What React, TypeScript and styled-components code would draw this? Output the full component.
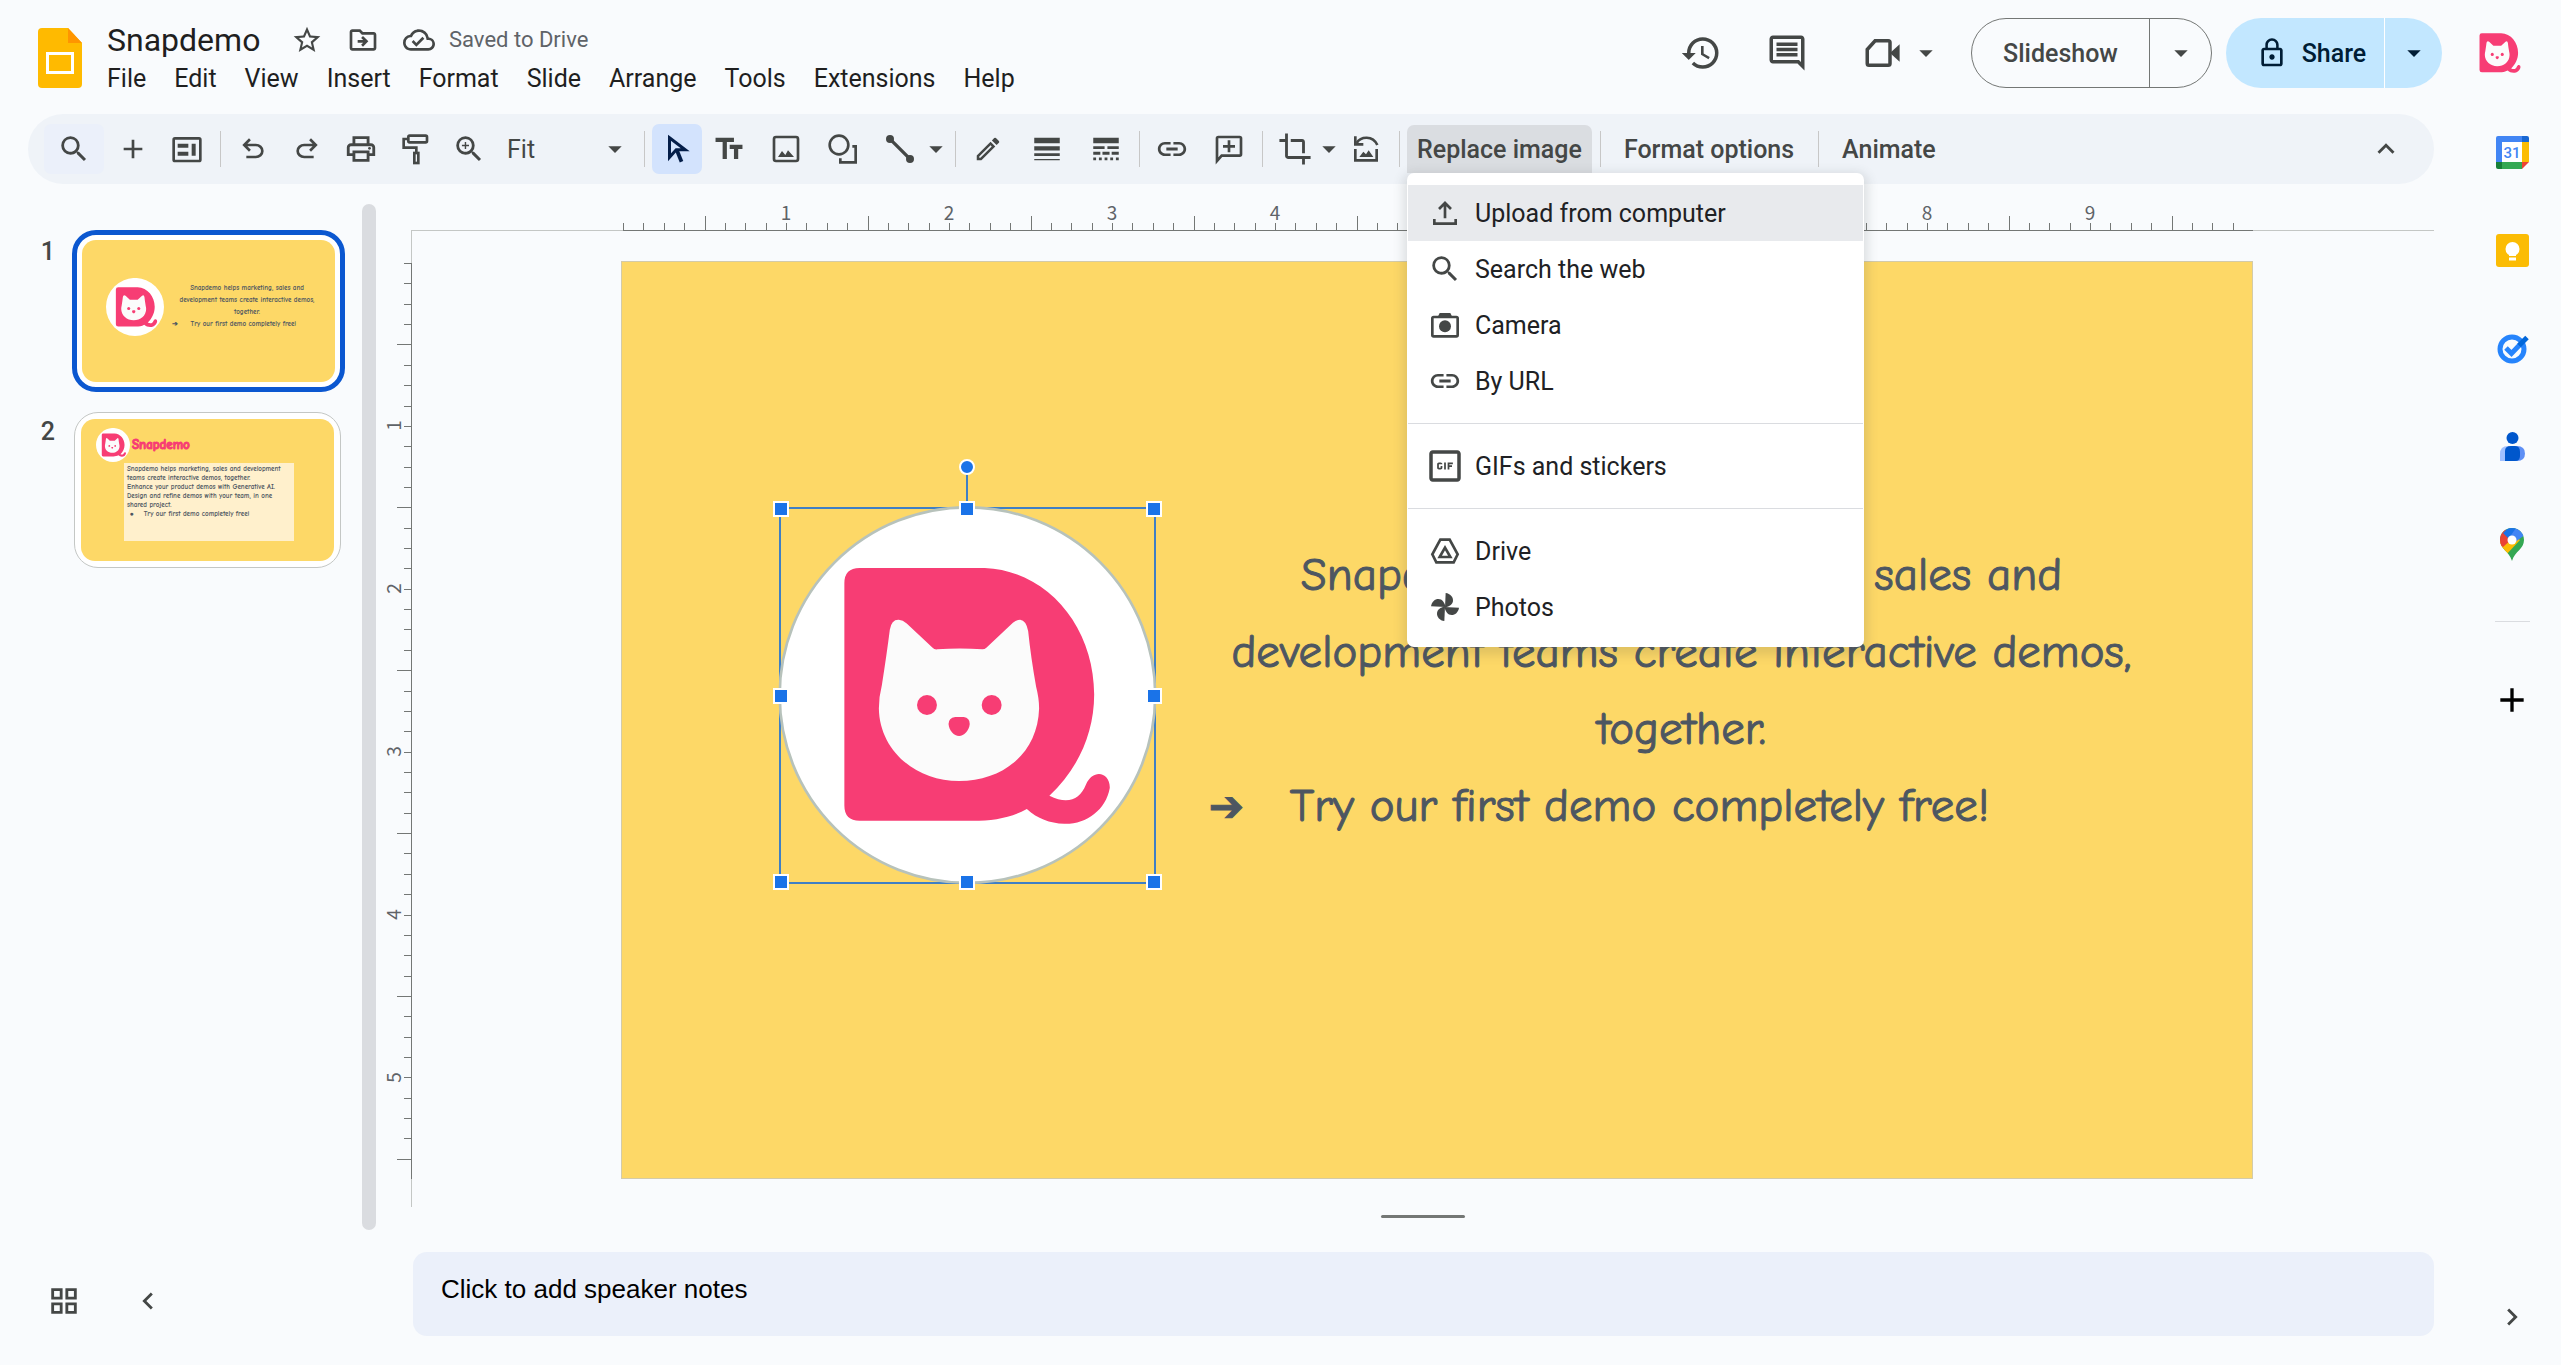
import React from "react";
import styled, { createGlobalStyle } from "styled-components";
import {
  MdSearch, MdAdd, MdStarBorder, MdOutlineDriveFileMove, MdOutlineCloudDone, MdHistory,
  MdOutlineInsertComment, MdOutlinePrint, MdZoomIn, MdTextFields, MdLineWeight, MdLineStyle,
  MdLink, MdCrop, MdKeyboardArrowUp, MdLockOutline, MdOutlineGifBox, MdOutlineGridView,
  MdArrowDropDown, MdChevronLeft, MdChevronRight, MdOutlineModeEdit,
} from "react-icons/md";

const ui = `Roboto, "Liberation Sans", sans-serif`;
const comic = `"Comic Sans MS", "Comic Neue", "Open Sans", sans-serif`;
const ink = "#444746";
const pink = "#f73d74";
const yellow = "#fdd867";
const blue = "#1a73e8";

const GlobalStyle = createGlobalStyle`
  *, *::before, *::after { box-sizing: border-box; }
  body { margin: 0; background: #f9fbfd; font-family: ${ui}; color: #1f1f1f; }
  button, input, select, textarea { font: inherit; color: inherit; border: 0; padding: 0; margin: 0; background: none; outline: none; }
  svg { display: block; flex: none; }
`;

/* ---------- page ---------- */
const Page = styled.div`
  display: flex;
  flex-direction: column;
  min-height: 100vh;
`;
const Header = styled.header`
  display: flex;
  align-items: flex-start;
  height: 114px;
  padding: 18px 40px 0 38px;
`;
const Body = styled.div`
  display: flex;
  flex: 1;
`;
const Main = styled.main`
  display: flex;
  flex-direction: column;
  flex: 1;
  min-width: 0;
  padding-right: 29px;
`;

/* ---------- header ---------- */
const DocLogo = styled.a`
  padding-top: 10px;
`;
const DocInfo = styled.div`
  margin-left: 25px;
`;
const TitleRow = styled.div`
  display: flex;
  align-items: center;
  gap: 24px;
  height: 44px;
  color: ${ink};
`;
const TitleInput = styled.input`
  width: 160px;
  font-size: 32px;
  line-height: 40px;
  color: #1f1f1f;
`;
const BareButton = styled.button`
  display: flex;
  align-items: center;
  justify-content: center;
  color: ${ink};
`;
const SavedButton = styled(BareButton)`
  gap: 14px;
  font-size: 22px;
  line-height: 32px;
  color: #5f6368;
`;
const MenuBar = styled.nav`
  display: flex;
  gap: 28px;
  height: 34px;
`;
const MenuBarButton = styled.button`
  font-size: 25px;
  line-height: 34px;
`;
const HeaderTools = styled.div`
  display: flex;
  align-items: center;
  height: 70px;
  margin-left: auto;
`;
const HeaderIcons = styled.div`
  display: flex;
  gap: 30px;
  margin-right: 30px;
`;
const HeaderIcon = styled(BareButton)`
  width: 56px;
  height: 56px;
`;
const MeetGroup = styled.div`
  display: flex;
  padding-left: 10px;
`;
const MeetCaret = styled(BareButton)`
  width: 30px;
`;
const SlideshowPill = styled.div`
  display: flex;
  height: 70px;
  width: 241px;
  border: 1px solid #747775;
  border-radius: 35px;
  color: ${ink};
`;
const SharePill = styled.div`
  display: flex;
  height: 70px;
  width: 216px;
  margin: 0 37px 0 14px;
  border-radius: 35px;
  background: #c2e7ff;
  color: #001d35;
`;
const PillMain = styled.button<{ $pad?: number }>`
  display: flex;
  flex: 1;
  align-items: center;
  justify-content: center;
  gap: 14px;
  padding-left: ${(p) => p.$pad ?? 0}px;
  font-size: 25px;
  font-weight: 500;
`;
const PillCaret = styled.button<{ $line: string; $w: number }>`
  display: flex;
  align-items: center;
  justify-content: center;
  width: ${(p) => p.$w}px;
  border-left: 1px solid ${(p) => p.$line};
`;

/* ---------- toolbar ---------- */
const Toolbar = styled.div`
  display: flex;
  align-items: center;
  height: 70px;
  margin-left: 28px;
  padding: 0 23px 0 16px;
  border-radius: 35px;
  background: #eff3f8;
  color: ${ink};
`;
const Group = styled.div<{ $gap?: number }>`
  display: flex;
  gap: ${(p) => p.$gap ?? 0}px;
`;
const InsertGroup = styled(Group)`
  padding-left: 2px;
`;
const Rule = styled.span`
  width: 1px;
  height: 36px;
  margin: 0 7px 0 8px;
  background: #c7c7c7;
`;
const Tool = styled.button<{ $w?: number; $bg?: string }>`
  display: flex;
  align-items: center;
  justify-content: center;
  width: ${(p) => p.$w ?? 50}px;
  height: 50px;
  border-radius: 7px;
  background: ${(p) => p.$bg ?? "none"};
`;
const ZoomBox = styled.label`
  display: flex;
  align-items: center;
  width: 138px;
  height: 50px;
  margin-left: 4px;
  padding: 0 5px 0 9px;
`;
const ZoomSelect = styled.select`
  flex: 1;
  appearance: none;
  font-size: 25px;
`;
const TextTool = styled.button<{ $on?: boolean; $pad: number }>`
  display: block;
  height: 48px;
  padding: 0 ${(p) => p.$pad}px;
  border-radius: 7px 7px 0 0;
  font-size: 25px;
  font-weight: 500;
  white-space: nowrap;
  background: ${(p) => (p.$on ? "#dadde1" : "none")};
`;
const MenuAnchor = styled.div`
  position: relative;
`;
const CollapseButton = styled(Tool)`
  margin-left: auto;
`;

/* ---------- drop-down menu ---------- */
const Menu = styled.div`
  position: absolute;
  z-index: 5;
  top: 100%;
  left: 0;
  width: 457px;
  padding: 12px 1px;
  border-radius: 7px;
  background: #fff;
  box-shadow: 0 4px 11px 4px rgba(60, 64, 67, 0.15);
`;
const MenuItem = styled.button<{ $on?: boolean }>`
  display: flex;
  align-items: center;
  gap: 14px;
  width: 100%;
  height: 56px;
  padding-left: 21px;
  font-size: 25px;
  color: #202124;
  background: ${(p) => (p.$on ? "#e8eaed" : "none")};
  svg { color: ${ink}; }
`;
const MenuRule = styled.hr`
  height: 1px;
  margin: 14px 0;
  border: 0;
  background: #dadce0;
`;

/* ---------- filmstrip ---------- */
const Work = styled.div`
  display: flex;
  flex: 1;
`;
const Side = styled.aside`
  display: flex;
  flex-direction: column;
  width: 377px;
`;
const FilmArea = styled.div`
  display: flex;
  flex: 1;
  justify-content: space-between;
  padding-right: 1px;
`;
const FilmList = styled.ol`
  display: flex;
  flex-direction: column;
  gap: 18px;
  margin: 0;
  padding: 46px 0 0 31px;
  list-style: none;
`;
const FilmItem = styled.li`
  display: flex;
  align-items: flex-start;
`;
const FilmNumber = styled.span`
  width: 24px;
  margin-right: 17px;
  padding-top: 5px;
  text-align: right;
  font-size: 25px;
  line-height: 34px;
  font-weight: 500;
  color: ${ink};
`;
const Frame = styled.button<{ $on?: boolean }>`
  display: block;
  padding: ${(p) => (p.$on ? 5 : 6)}px;
  margin: ${(p) => (p.$on ? 0 : 2)}px;
  border: ${(p) => (p.$on ? "5px solid #0b57d0" : "1px solid #c4c7c5")};
  border-radius: 24px;
  background: #fff;
  text-align: left;
`;
const ThumbSlide = styled.span`
  position: relative;
  display: block;
  width: 253px;
  height: 142px;
  border-radius: 14px;
  background: ${yellow};
  overflow: hidden;
  font-family: ${comic};
  font-weight: 700;
  color: #4d5661;
`;
const ThumbLogo = styled.span<{ $x: number; $y: number; $s: number }>`
  position: absolute;
  left: ${(p) => p.$x}px;
  top: ${(p) => p.$y}px;
  width: ${(p) => p.$s}px;
  height: ${(p) => p.$s}px;
  svg { width: 100%; height: 100%; }
`;
const ThumbText = styled.span`
  position: absolute;
  left: 90px;
  top: 42px;
  width: 150px;
  font-size: 7px;
  line-height: 12px;
  text-align: center;
  white-space: nowrap;
  span { display: block; }
`;
const ThumbBullet = styled.b`
  display: block;
  text-align: left;
  white-space: pre;
`;
const ThumbTitle = styled.span`
  position: absolute;
  left: 51px;
  top: 17px;
  font-size: 13px;
  line-height: 18px;
  -webkit-text-stroke: 1px ${pink};
  color: ${pink};
`;
const ThumbBox = styled.span`
  position: absolute;
  left: 43px;
  top: 44px;
  width: 170px;
  height: 78px;
  padding: 2px 3px;
  background: #fff0cc;
  font-size: 7px;
  line-height: 9px;
  white-space: pre;
  span { display: block; }
`;
const FilmScroll = styled.div`
  width: 14px;
  margin-top: 20px;
  border-radius: 7px;
  background: #dadce0;
`;
const SideFooter = styled.div`
  display: flex;
  align-items: center;
  gap: 34px;
  height: 135px;
  padding: 6px 0 0 39px;
`;
const FooterButton = styled(BareButton)`
  width: 50px;
  height: 50px;
`;

/* ---------- canvas ---------- */
const Stage = styled.section`
  display: flex;
  flex-direction: column;
  flex: 1;
  min-width: 0;
`;
const RulerTop = styled.div`
  height: 47px;
  margin-left: 34px;
  padding: 0 181px 0 212px;
  border-bottom: 1px solid #c4c7c5;
`;
const RulerTopInner = styled.div`
  display: flex;
  flex-direction: column;
  justify-content: flex-end;
  height: 47px;
  border-bottom: 1px solid #747775;
`;
const LabelsTop = styled.div`
  display: flex;
  padding: 0 5%;
  font-family: "Noto Sans CJK SC", sans-serif;
  font-size: 19px;
  line-height: 8px;
  color: #5f6368;
  span { flex: 1; text-align: center; }
`;
const TicksTop = styled.div`
  display: flex;
  align-items: flex-end;
  height: 14px;
`;
const TickTop = styled.i<{ $long: boolean }>`
  flex: 1;
  height: ${(p) => (p.$long ? 14 : 7)}px;
  border-left: 1px solid #747775;
`;
const StageRow = styled.div`
  display: flex;
`;
const RulerLeft = styled.div`
  display: flex;
  width: 35px;
  padding: 32px 0 28px;
  border-right: 1px solid #c4c7c5;
`;
const RulerLeftInner = styled.div`
  display: flex;
  justify-content: flex-end;
  width: 35px;
  flex: none;
  border-right: 1px solid #747775;
`;
const LabelsLeft = styled.div`
  display: flex;
  flex-direction: column;
  font-family: "Noto Sans CJK SC", sans-serif;
  font-size: 19px;
  line-height: 8px;
  color: #5f6368;
`;
const LabelLeft = styled.span<{ $grow: number }>`
  display: flex;
  align-items: center;
  justify-content: center;
  flex: ${(p) => p.$grow} 1 0;
  writing-mode: vertical-rl;
  rotate: 180deg;
`;
const TicksLeft = styled.div`
  display: flex;
  flex-direction: column;
  align-items: flex-end;
  width: 14px;
`;
const TickLeft = styled.i<{ $long: boolean }>`
  flex: 1;
  width: ${(p) => (p.$long ? 14 : 7)}px;
  border-top: 1px solid #747775;
`;
const Canvas = styled.div`
  flex: 1;
  padding: 30px 181px 28px 209px;
`;
const Slide = styled.div`
  position: relative;
  aspect-ratio: 16 / 9;
  border: 1px solid #d3cba9;
  background: ${yellow};
`;
const ImageBox = styled.div`
  position: absolute;
  left: 10%;
  top: 27%;
  width: calc(23% + 2px);
  aspect-ratio: 1;
  margin: -2px 0 0 -6px;
  border: 2px solid #3f7fc4;
  > svg { width: 100%; height: 100%; overflow: visible; }
`;
const Handle = styled.span<{ $x: number; $y: number }>`
  position: absolute;
  left: ${(p) => p.$x}%;
  top: ${(p) => p.$y}%;
  width: 16px;
  height: 16px;
  margin: -8px;
  border: 2px solid #fff;
  background: ${blue};
`;
const RotateStem = styled.span`
  position: absolute;
  left: calc(50% - 1px);
  bottom: 100%;
  width: 2px;
  height: 42px;
  background: #3f7fc4;
`;
const RotateKnob = styled(Handle)`
  margin-top: -50px;
  border-radius: 50%;
`;
const SlideText = styled.div`
  position: absolute;
  left: 36%;
  top: 30%;
  width: 58%;
  font-family: ${comic};
  font-size: 47px;
  font-variant-ligatures: none;
  -webkit-text-stroke: 1px #4d5661;
  line-height: 77px;
  color: #4d5661;
  text-align: center;
  p { margin: 0; white-space: nowrap; }
`;
const BulletLine = styled.p`
  display: flex;
`;
const BulletMark = styled.span`
  width: 81px;
  text-align: left;
  font-family: "DejaVu Sans", sans-serif;
  font-size: 42px;
`;
const Splitter = styled.div`
  width: 84px;
  height: 3px;
  margin: 8px auto 34px;
  border-radius: 2px;
  background: #747775;
  translate: 17px 0;
`;
const Notes = styled.textarea`
  display: block;
  height: 84px;
  margin: 0 0 28px 36px;
  padding: 20px 28px;
  border-radius: 14px;
  background: #ebf0fa;
  resize: none;
  font-family: "Liberation Sans", Arial, sans-serif;
  font-size: 26px;
  line-height: 34px;
  &::placeholder { color: #000; opacity: 1; }
`;

/* ---------- right rail ---------- */
const Rail = styled.aside`
  display: flex;
  flex-direction: column;
  align-items: center;
  width: 98px;
  padding-bottom: 23px;
`;
const RailButton = styled(BareButton)`
  width: 77px;
  height: 50px;
  margin: 13px 0 35px;
`;
const RailRule = styled.hr`
  width: 35px;
  height: 1px;
  margin: 17px 0 40px;
  border: 0;
  background: #dadce0;
`;
const RailToggle = styled(BareButton)`
  width: 50px;
  height: 50px;
  margin-top: auto;
`;

/* ---------- drawings ---------- */
const CatMark = () => (
  <>
    <path fill={pink} d="M358 382H735C925 390 1065 560 1065 763C1065 880 1015 990 930 1068C985 1096 1022 1080 1040 1035C1062 984 1114 998 1112 1045C1100 1112 1040 1155 975 1153C930 1150 895 1138 862 1108C815 1135 760 1144 700 1144H358Q312 1144 312 1098V428Q312 382 358 382Z" />
    <path fill="#fbfbfb" d="M449 568Q454 537 476 538Q488 538 500 549L578 622Q583 628 592 627Q660 622 728 627Q735 627 740 622L820 547Q832 538 842 538Q860 540 866 572Q874 650 890 740Q899 775 899 805C895 940 790 1024 658 1024C525 1024 418 930 416 805Q416 770 425 735Q440 640 449 568Z" />
    <g fill={pink}>
      <circle cx="561" cy="795" r="30" />
      <circle cx="756" cy="795" r="30" />
      <path d="M646 831H672Q690 834 690 852C688 872 672 888 658 888C642 888 628 872 626 852Q626 834 646 831Z" />
    </g>
  </>
);
const CatBadge = ({ ring }: { ring?: boolean }) => (
  <svg viewBox="121 204 1124 1124" aria-label="Snapdemo logo">
    <circle cx="683" cy="765" r={ring ? 566 : 562} fill="#fff" stroke="#b7c2bb" strokeWidth={ring ? 8 : 0} />
    <CatMark />
  </svg>
);
const CatAvatar = () => (
  <svg width="42" height="42" viewBox="302 372 820 791"><CatMark /></svg>
);

const Line = ({ size = 32, w = 2, children }: { size?: number; w?: number; children: React.ReactNode }) => (
  <svg width={size} height={size} viewBox="0 0 24 24" fill="none" stroke="currentColor" strokeWidth={w}>{children}</svg>
);
const SlidesLogo = () => (
  <svg width="44" height="60" viewBox="0 0 44 60">
    <path fill="#ffba00" d="M4 0H30L44 15V56Q44 60 40 60H4Q0 60 0 56V4Q0 0 4 0Z" />
    <path fill="#ff9500" d="M30 0L44 15H30Z" />
    <path fill="none" stroke="#fff" strokeWidth="3" d="M9.500 25.500H34.500V44.500H9.500Z" />
  </svg>
);
const PanelIcon = () => (
  <Line><rect x="2" y="4" width="20" height="17" rx="1" /><path d="M5 9.500h8M5 15.500h8M17 8v9" strokeWidth="3" /></Line>
);
const UndoIcon = ({ flip }: { flip?: boolean }) => (
  <svg width="32" height="32" viewBox="0 -960 960 960" fill="currentColor">
    <path transform={flip ? "translate(960 0) scale(-1 1)" : undefined} d="M280-200v-80h284q63 0 109.500-40T720-420q0-60-46.500-100T564-560H312l104 104-56 56-200-200 200-200 56 56-104 104h252q97 0 166.500 63T800-420q0 94-69.500 157T564-200H280Z" />
  </svg>
);
const RollerIcon = () => (
  <Line><rect x="7" y="2" width="14" height="5" rx="1" /><path d="M7 4.500H3.500V11H13V15" /><rect x="11.500" y="15" width="3" height="7.500" /></Line>
);
const CursorIcon = () => (
  <svg width="36" height="36" viewBox="0 0 24 24" fill="none" stroke="#041e49" strokeWidth="2">
    <path d="M7 4.500L17.500 12.500H11.500L7 17.500Z" />
    <path d="M12 13L15 20.500" strokeWidth="2.500" />
  </svg>
);
const PictureIcon = () => (
  <Line><rect x="3" y="3" width="18" height="18" rx="1.500" /><path d="M6 18l3-4.500 2.500 3 2-3.500 4.500 5Z" fill="currentColor" stroke="none" /></Line>
);
const ShapeIcon = () => (
  <Line><circle cx="9" cy="9" r="7" /><path d="M19 10h2.500v12H10v-3" /></Line>
);
const LineIcon = () => (
  <Line><path d="M4 4L20 20" strokeWidth="2.500" /><circle cx="4.500" cy="4.500" r="2" fill="currentColor" /><circle cx="19.500" cy="19.500" r="2" fill="currentColor" /></Line>
);
const AddCommentIcon = () => (
  <Line><path d="M3 21V4Q3 3 4 3H20Q21 3 21 4V16Q21 17 20 17H6.500Z" /><path d="M12 5.500v9M7.500 10h9" /></Line>
);
const ResetImageIcon = () => (
  <Line><path d="M4 12v8.500h16V12" /><path d="M5 7.500C8 2.500 17 1.500 20.500 9" /><path d="M4 2.500v6h6" /><path d="M7 18l3-4 2 2 2-3 3.500 5Z" fill="currentColor" stroke="none" /></Line>
);
const MeetIcon = () => (
  <Line size={42}><path d="M7.500 5H15Q16 5 16 6V18Q16 19 15 19H4Q3 19 3 18V10Z" /><path d="M16 12L21.500 7V17Z" fill="currentColor" stroke="none" /></Line>
);
const UploadIcon = () => (
  <Line><path d="M12 16V4.500M7.500 9L12 4.500L16.500 9M4 16.500V20H20V16.500" /></Line>
);
const CameraIcon = () => (
  <Line><rect x="2.500" y="6" width="19" height="14.500" rx="1" /><path d="M8 3h8l1.500 3h-11Z" fill="currentColor" stroke="none" /><circle cx="12" cy="13" r="4.500" fill="currentColor" stroke="none" /></Line>
);
const DriveIcon = () => (
  <Line><path d="M8.500 3.500H15.500L21.500 14.500L18.500 20.500H5.500L2.500 14.500Z" /><path d="M12 9.500L16 16.500H8Z" /></Line>
);
const PhotosIcon = () => (
  <svg width="32" height="32" viewBox="0 0 24 24" fill="currentColor">
    {[0, 90, 180, 270].map((a) => (
      <path key={a} transform={`rotate(${a} 12 12)`} d="M12.500 1.500C16 2 18 4.500 18 7C18 10 15.500 11.500 12 12.500Z" />
    ))}
  </svg>
);
const CalendarLogo = () => (
  <svg width="33" height="33" viewBox="0 0 33 33">
    <path fill="#4285f4" d="M2 0H26V6H6V27H0V2Q0 0 2 0Z" />
    <path fill="#1967d2" d="M26 0H31Q33 0 33 2V6H26Z" />
    <path fill="#fbbc04" d="M26 6H33V26H26Z" />
    <path fill="#34a853" d="M6 26H26V33H6Z" />
    <path fill="#188038" d="M0 26H6V33H2Q0 33 0 31Z" />
    <path fill="#ea4335" d="M26 26H33L26 33Z" />
    <path fill="#fff" d="M6 6H26V26H6Z" />
    <text x="16" y="22" textAnchor="middle" fontFamily="Roboto, sans-serif" fontWeight="500" fontSize="15" fill="#4285f4">31</text>
  </svg>
);
const KeepLogo = () => (
  <svg width="33" height="33" viewBox="0 0 33 33">
    <rect width="33" height="33" rx="3" fill="#fbbc04" />
    <circle cx="16.500" cy="15" r="7" fill="#fff" />
    <path fill="#fff" d="M13 19h7v3h-7ZM13 23.500h7v3h-7Z" />
  </svg>
);
const TasksLogo = () => (
  <svg width="33" height="33" viewBox="0 0 33 33" fill="none">
    <circle cx="16" cy="17" r="12" stroke="#2684fc" strokeWidth="5" />
    <path d="M10 16L15.500 21.500L25 11.500" stroke="#2684fc" strokeWidth="5" />
    <path d="M23 13.500L31 5.500" stroke="#0066da" strokeWidth="5" />
  </svg>
);
const ContactsLogo = () => (
  <svg width="33" height="33" viewBox="0 0 33 33">
    <circle cx="16.500" cy="8" r="6" fill="#0057cc" />
    <path fill="#a1c0ff" d="M4 31V24Q4 16 12 16H17V31Z" />
    <path fill="#5e8ff5" d="M16 16H21Q29 16 29 23.500Q29 31 21 31H16Z" />
    <path fill="#0057cc" d="M9 31V21Q9 16 15 16H19Q24 16 24 22V26Q24 31 19 31Z" />
  </svg>
);
const MapsLogo = () => (
  <svg width="24" height="33" viewBox="0 0 24 33">
    <clipPath id="pin"><path d="M12 0C19 0 24 5 24 12C24 21 15 23 12 33C9 23 0 21 0 12C0 5 5 0 12 0Z" /></clipPath>
    <g clipPath="url(#pin)">
      <path fill="#34a853" d="M0 0H24V33H0Z" />
      <path fill="#fbbc04" d="M0 13L10 5L20 12L5 28L0 20Z" />
      <path fill="#ea4335" d="M0 0H5L12 11L3 19L0 17Z" />
      <path fill="#1a73e8" d="M3 5L12 -4L18 2L10 12Z" />
      <path fill="#4285f4" d="M16 0L26 6L14 15L9 10Z" />
    </g>
    <circle cx="12" cy="12" r="4.500" fill="#fff" />
  </svg>
);

const Caret = () => <MdArrowDropDown size={32} />;

const menus = ["File", "Edit", "View", "Insert", "Format", "Slide", "Arrange", "Tools", "Extensions", "Help"];

const replaceItems: { label: string; icon: React.ReactNode; rule?: boolean }[] = [
  { label: "Upload from computer", icon: <UploadIcon /> },
  { label: "Search the web", icon: <MdSearch size={34} /> },
  { label: "Camera", icon: <CameraIcon /> },
  { label: "By URL", icon: <MdLink size={34} />, rule: true },
  { label: "GIFs and stickers", icon: <MdOutlineGifBox size={42} />, rule: true },
  { label: "Drive", icon: <DriveIcon /> },
  { label: "Photos", icon: <PhotosIcon /> },
];
const ItemIcon = styled.span`
  display: flex;
  justify-content: center;
  width: 32px;
`;

const railApps = [
  { name: "Calendar", icon: <CalendarLogo /> },
  { name: "Keep", icon: <KeepLogo /> },
  { name: "Tasks", icon: <TasksLogo /> },
  { name: "Contacts", icon: <ContactsLogo /> },
  { name: "Maps", icon: <MapsLogo /> },
];

const handles = [[0, 0], [50, 0], [100, 0], [0, 50], [100, 50], [0, 100], [50, 100], [100, 100]];
const range = (n: number) => Array.from({ length: n }, (_, i) => i);

export default function App() {
  return (
    <Page>
      <GlobalStyle />
      <Header>
        <DocLogo href="#" aria-label="Slides home"><SlidesLogo /></DocLogo>
        <DocInfo>
          <TitleRow>
            <TitleInput aria-label="Title" defaultValue="Snapdemo" />
            <BareButton aria-label="Star"><MdStarBorder size={32} /></BareButton>
            <BareButton aria-label="Move"><MdOutlineDriveFileMove size={32} /></BareButton>
            <SavedButton><MdOutlineCloudDone size={32} color={ink} />Saved to Drive</SavedButton>
          </TitleRow>
          <MenuBar>
            {menus.map((m) => <MenuBarButton key={m}>{m}</MenuBarButton>)}
          </MenuBar>
        </DocInfo>
        <HeaderTools>
          <HeaderIcons>
            <HeaderIcon aria-label="Version history"><MdHistory size={42} /></HeaderIcon>
            <HeaderIcon aria-label="Comments"><MdOutlineInsertComment size={42} /></HeaderIcon>
            <MeetGroup>
              <HeaderIcon aria-label="Join a call"><MeetIcon /></HeaderIcon>
              <MeetCaret aria-label="Call options"><Caret /></MeetCaret>
            </MeetGroup>
          </HeaderIcons>
          <SlideshowPill>
            <PillMain>Slideshow</PillMain>
            <PillCaret $w={62} $line="#747775" aria-label="Slideshow options"><Caret /></PillCaret>
          </SlideshowPill>
          <SharePill>
            <PillMain $pad={12}><MdLockOutline size={32} />Share</PillMain>
            <PillCaret $w={58} $line="#ffffff" aria-label="Share options"><Caret /></PillCaret>
          </SharePill>
          <BareButton aria-label="Account"><CatAvatar /></BareButton>
        </HeaderTools>
      </Header>

      <Body>
        <Main>
          <Toolbar role="toolbar">
            <Group $gap={7}>
              <Tool $w={60} $bg="#ebf0fa" aria-label="Search the menus"><MdSearch size={34} /></Tool>
              <Tool $w={44} aria-label="New slide"><MdAdd size={32} /></Tool>
              <Tool aria-label="Layout"><PanelIcon /></Tool>
            </Group>
            <Rule />
            <Group $gap={4}>
              <Tool aria-label="Undo"><UndoIcon /></Tool>
              <Tool aria-label="Redo"><UndoIcon flip /></Tool>
              <Tool aria-label="Print"><MdOutlinePrint size={34} /></Tool>
              <Tool aria-label="Paint format"><RollerIcon /></Tool>
              <Tool aria-label="Zoom"><MdZoomIn size={34} /></Tool>
            </Group>
            <ZoomBox>
              <ZoomSelect aria-label="Zoom level"><option>Fit</option></ZoomSelect>
              <Caret />
            </ZoomBox>
            <Rule />
            <Tool $bg="#d3e3fd" aria-label="Select"><CursorIcon /></Tool>
            <InsertGroup $gap={7}>
              <Tool aria-label="Text box"><MdTextFields size={34} /></Tool>
              <Tool aria-label="Insert image"><PictureIcon /></Tool>
              <Tool aria-label="Shape"><ShapeIcon /></Tool>
              <Group>
                <Tool aria-label="Line"><LineIcon /></Tool>
                <Tool $w={22} aria-label="Line options"><Caret /></Tool>
              </Group>
            </InsertGroup>
            <Rule />
            <Group $gap={9}>
              <Tool aria-label="Border color"><MdOutlineModeEdit size={30} /></Tool>
              <Tool aria-label="Border weight"><MdLineWeight size={34} /></Tool>
              <Tool aria-label="Border dash"><MdLineStyle size={34} /></Tool>
            </Group>
            <Rule />
            <Group $gap={7}>
              <Tool aria-label="Insert link"><MdLink size={34} /></Tool>
              <Tool aria-label="Add comment"><AddCommentIcon /></Tool>
            </Group>
            <Rule />
            <Group $gap={3}>
              <Group>
                <Tool aria-label="Crop image"><MdCrop size={34} /></Tool>
                <Tool $w={18} aria-label="Mask image"><Caret /></Tool>
              </Group>
              <Tool aria-label="Reset image"><ResetImageIcon /></Tool>
            </Group>
            <Rule />
            <MenuAnchor>
              <TextTool $on $pad={10}>Replace image</TextTool>
              <Menu role="menu">
                {replaceItems.map((it, i) => (
                  <React.Fragment key={it.label}>
                    <MenuItem role="menuitem" $on={i === 0}><ItemIcon>{it.icon}</ItemIcon>{it.label}</MenuItem>
                    {it.rule && <MenuRule />}
                  </React.Fragment>
                ))}
              </Menu>
            </MenuAnchor>
            <Rule />
            <TextTool $pad={16}>Format options</TextTool>
            <Rule />
            <TextTool $pad={16}>Animate</TextTool>
            <CollapseButton aria-label="Hide the menus"><MdKeyboardArrowUp size={34} /></CollapseButton>
          </Toolbar>

          <Work>
            <Side>
              <FilmArea>
                <FilmList>
                  <FilmItem>
                    <FilmNumber>1</FilmNumber>
                    <Frame $on aria-label="Slide 1">
                      <ThumbSlide>
                        <ThumbLogo $x={24} $y={38} $s={58}><CatBadge /></ThumbLogo>
                        <ThumbText>
                          <span>Snapdemo helps marketing, sales and</span>
                          <span>development teams create interactive demos,</span>
                          <span>together.</span>
                          <ThumbBullet>{"➔     Try our first demo completely free!"}</ThumbBullet>
                        </ThumbText>
                      </ThumbSlide>
                    </Frame>
                  </FilmItem>
                  <FilmItem>
                    <FilmNumber>2</FilmNumber>
                    <Frame aria-label="Slide 2">
                      <ThumbSlide>
                        <ThumbLogo $x={15} $y={9} $s={34}><CatBadge /></ThumbLogo>
                        <ThumbTitle>Snapdemo</ThumbTitle>
                        <ThumbBox>
                          <span>Snapdemo helps marketing, sales and development</span>
                          <span>teams create interactive demos, together.</span>
                          <span>Enhance your product demos with Generative AI.</span>
                          <span>Design and refine demos with your team, in one</span>
                          <span>shared project.</span>
                          <span>{" ●    Try our first demo completely free!"}</span>
                        </ThumbBox>
                      </ThumbSlide>
                    </Frame>
                  </FilmItem>
                </FilmList>
                <FilmScroll />
              </FilmArea>
              <SideFooter>
                <FooterButton aria-label="Grid view"><MdOutlineGridView size={34} /></FooterButton>
                <FooterButton aria-label="Hide filmstrip"><MdChevronLeft size={34} /></FooterButton>
              </SideFooter>
            </Side>

            <Stage>
              <RulerTop>
                <RulerTopInner>
                  <LabelsTop>{range(9).map((n) => <span key={n}>{n + 1}</span>)}</LabelsTop>
                  <TicksTop>{range(80).map((n) => <TickTop key={n} $long={n % 8 === 4} />)}</TicksTop>
                </RulerTopInner>
              </RulerTop>
              <StageRow>
                <RulerLeft>
                  <RulerLeftInner>
                    <LabelsLeft>
                      <LabelLeft $grow={4} />
                      {range(5).map((n) => <LabelLeft key={n} $grow={8}>{n + 1}</LabelLeft>)}
                      <LabelLeft $grow={1} />
                    </LabelsLeft>
                    <TicksLeft>{range(45).map((n) => <TickLeft key={n} $long={n % 8 === 4} />)}</TicksLeft>
                  </RulerLeftInner>
                </RulerLeft>
                <Canvas>
                  <Slide>
                    <ImageBox>
                      <CatBadge ring />
                      <RotateStem />
                      {handles.map(([x, y]) => <Handle key={`${x}-${y}`} $x={x} $y={y} />)}
                      <RotateKnob $x={50} $y={0} />
                    </ImageBox>
                    <SlideText>
                      <p>Snapdemo helps marketing, sales and</p>
                      <p>development teams create interactive demos,</p>
                      <p>together.</p>
                      <BulletLine><BulletMark>➔</BulletMark>Try our first demo completely free!</BulletLine>
                    </SlideText>
                  </Slide>
                </Canvas>
              </StageRow>
              <Splitter />
              <Notes aria-label="Speaker notes" placeholder="Click to add speaker notes" />
            </Stage>
          </Work>
        </Main>

        <Rail>
          {railApps.map((a) => <RailButton key={a.name} aria-label={a.name}>{a.icon}</RailButton>)}
          <RailRule />
          <RailButton aria-label="Get add-ons"><MdAdd size={40} color="#000" /></RailButton>
          <RailToggle aria-label="Hide side panel"><MdChevronRight size={34} /></RailToggle>
        </Rail>
      </Body>
    </Page>
  );
}
